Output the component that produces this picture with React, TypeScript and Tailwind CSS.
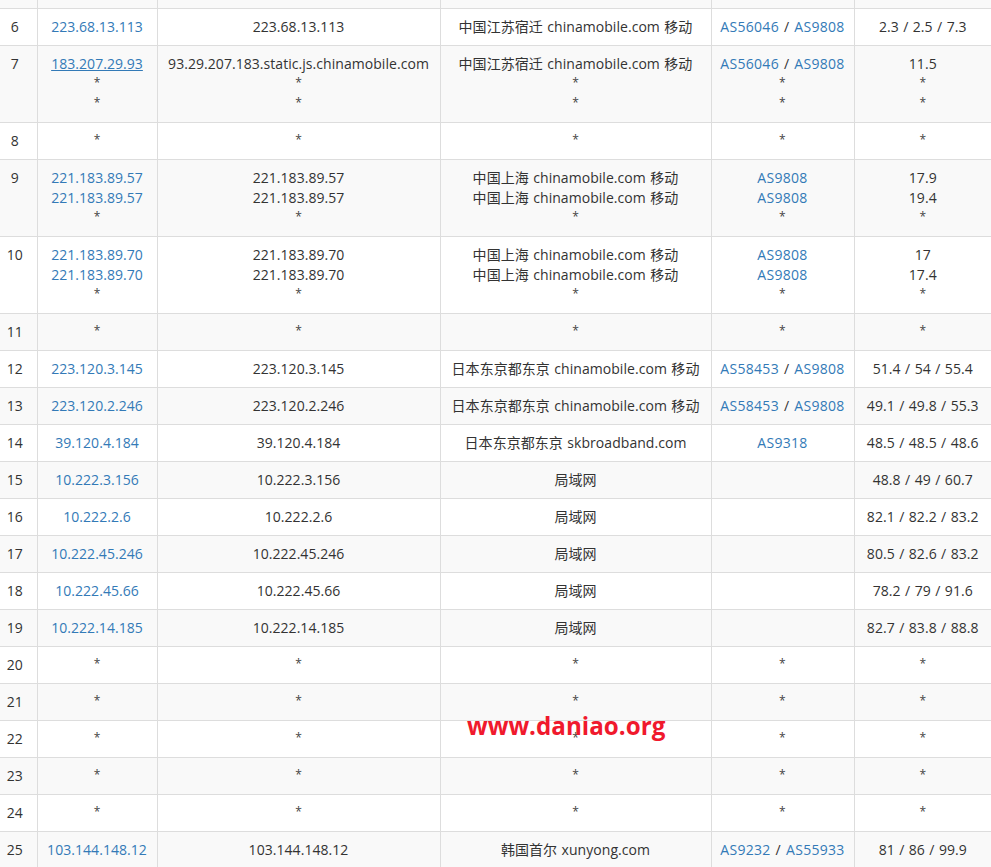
type Row = { hop: number; ip: string[]; host?: string[]; loc: string[]; as: string[]; rtt: string[] };

const M1 = "中国江苏宿迁 chinamobile.com 移动";
const M2 = "中国上海 chinamobile.com 移动";
const M3 = "日本东京都东京 chinamobile.com 移动";
const LAN = "局域网";

const star = (hop: number): Row => ({ hop, ip: ["*"], loc: ["*"], as: ["*"], rtt: ["*"] });

const rows: Row[] = [
  { hop: 6, ip: ["223.68.13.113"], loc: [M1], as: ["AS56046 / AS9808"], rtt: ["2.3 / 2.5 / 7.3"] },
  {
    hop: 7,
    ip: ["183.207.29.93", "*", "*"],
    host: ["93.29.207.183.static.js.chinamobile.com", "*", "*"],
    loc: [M1, "*", "*"],
    as: ["AS56046 / AS9808", "*", "*"],
    rtt: ["11.5", "*", "*"],
  },
  star(8),
  {
    hop: 9,
    ip: ["221.183.89.57", "221.183.89.57", "*"],
    loc: [M2, M2, "*"],
    as: ["AS9808", "AS9808", "*"],
    rtt: ["17.9", "19.4", "*"],
  },
  {
    hop: 10,
    ip: ["221.183.89.70", "221.183.89.70", "*"],
    loc: [M2, M2, "*"],
    as: ["AS9808", "AS9808", "*"],
    rtt: ["17", "17.4", "*"],
  },
  star(11),
  { hop: 12, ip: ["223.120.3.145"], loc: [M3], as: ["AS58453 / AS9808"], rtt: ["51.4 / 54 / 55.4"] },
  { hop: 13, ip: ["223.120.2.246"], loc: [M3], as: ["AS58453 / AS9808"], rtt: ["49.1 / 49.8 / 55.3"] },
  { hop: 14, ip: ["39.120.4.184"], loc: ["日本东京都东京 skbroadband.com"], as: ["AS9318"], rtt: ["48.5 / 48.5 / 48.6"] },
  { hop: 15, ip: ["10.222.3.156"], loc: [LAN], as: [""], rtt: ["48.8 / 49 / 60.7"] },
  { hop: 16, ip: ["10.222.2.6"], loc: [LAN], as: [""], rtt: ["82.1 / 82.2 / 83.2"] },
  { hop: 17, ip: ["10.222.45.246"], loc: [LAN], as: [""], rtt: ["80.5 / 82.6 / 83.2"] },
  { hop: 18, ip: ["10.222.45.66"], loc: [LAN], as: [""], rtt: ["78.2 / 79 / 91.6"] },
  { hop: 19, ip: ["10.222.14.185"], loc: [LAN], as: [""], rtt: ["82.7 / 83.8 / 88.8"] },
  star(20),
  star(21),
  star(22),
  star(23),
  star(24),
  { hop: 25, ip: ["103.144.148.12"], loc: ["韩国首尔 xunyong.com"], as: ["AS9232 / AS55933"], rtt: ["81 / 86 / 99.9"] },
];

const Lines = ({ items, link, hover }: { items: string[]; link?: boolean; hover?: boolean }) => (
  <>
    {items.map((t, i) => (
      <div key={i} className="h-5">
        {t === "*" ? (
          <span className="align-[2px] text-xs text-[#444]">*</span>
        ) : link ? (
          t.split(" / ").map((p, j) => (
            <span key={j}>
              {j > 0 && " / "}
              <a className={hover ? "text-[#337ab7] underline" : "text-[#337ab7]"}>{p}</a>
            </span>
          ))
        ) : (
          t
        )}
      </div>
    ))}
  </>
);

const td = "border border-[#ddd] p-2 align-top leading-5 whitespace-nowrap";

export default function App() {
  return (
    <div className="relative h-[867px] overflow-hidden bg-white text-sm tracking-[0.05px] text-[#333] [word-spacing:0.75px] font-['Open_Sans','Noto_Sans_CJK_SC',sans-serif]">
      <table className="w-[991px] table-fixed border-collapse border-t-0 text-center">
        <colgroup>
          <col className="w-[37px]" />
          <col className="w-[120px]" />
          <col className="w-[283px]" />
          <col className="w-[271px]" />
          <col className="w-[143px]" />
          <col className="w-[137px]" />
        </colgroup>
        <tbody>
          <tr className="h-2 bg-[#f9f9f9]">
            <td className="border-x border-[#ddd] border-l-0" />
            <td className="border-x border-[#ddd]" />
            <td className="border-x border-[#ddd]" />
            <td className="border-x border-[#ddd]" />
            <td className="border-x border-[#ddd]" />
            <td className="border-r-0 border-l border-[#ddd]" />
          </tr>
          {rows.map((r) => (
            <tr key={r.hop} className={r.hop % 2 ? "bg-[#f9f9f9]" : "bg-white"}>
              <td className={`${td} border-l-0 pl-0 pr-[7px]`}>{r.hop}</td>
              <td className={td}>
                <Lines items={r.ip} link hover={r.hop === 7} />
              </td>
              <td className={td}>
                <Lines items={r.host ?? r.ip} />
              </td>
              <td className={td}>
                <Lines items={r.loc} />
              </td>
              <td className={`${td} tracking-[0.3px] [word-spacing:1px]`}>
                <Lines items={r.as} link />
              </td>
              <td className={`${td} border-r-0`}>
                <Lines items={r.rtt} />
              </td>
            </tr>
          ))}
        </tbody>
      </table>
      <div className="absolute left-[467px] top-[709px] text-[24.2px] leading-[34px] font-bold tracking-normal text-[#f0192d]">
        www.daniao.org
      </div>
    </div>
  );
}
